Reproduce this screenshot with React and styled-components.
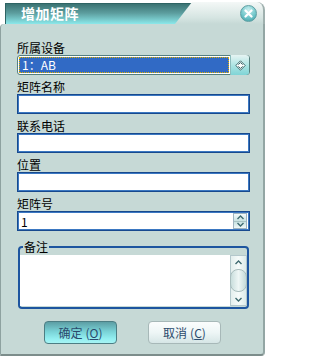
import React from "react";
import styled, { createGlobalStyle } from "styled-components";

const GlobalStyle = createGlobalStyle`
  body {
    margin: 0;
    background: #ffffff;
    font-family: "Noto Sans CJK SC", "DejaVu Sans", sans-serif;
  }
`;

const Window = styled.div`
  width: 265px;
  margin-top: 2px;
  display: flex;
  flex-direction: column;
`;

const Header = styled.div`
  display: flex;
  align-items: flex-end;
  height: 22px;
`;

const TitleTab = styled.div`
  margin-left: 5px;
  width: 187px;
  height: 21px;
  box-sizing: border-box;
  border-top: 1px solid #2e6464;
  border-left: 1px solid #2e6464;
  background: linear-gradient(#3b7373, #5c9d9e 45%, #8be8ea);
  color: #ffffff;
  font-weight: bold;
  font-size: 14px;
  line-height: 19px;
  padding-left: 15px;
  letter-spacing: 0.5px;
`;

const Cap = styled.div`
  flex: 1;
  margin-left: -17px;
  height: 22px;
  box-sizing: border-box;
  background: linear-gradient(#f4f8f7, #d6e5e2 70%, #c6d9d6);
  clip-path: polygon(0 100%, 17px 0, 100% 0, 100% 100%);
  border-top-right-radius: 8px;
  border-right: 2px solid #9fb0ae;
  display: flex;
  justify-content: flex-end;
  align-items: center;
  padding-right: 6px;
`;

const CloseButton = styled.div`
  width: 17px;
  height: 17px;
  border-radius: 50%;
  box-sizing: border-box;
  border: 1px solid #5e9ea2;
  background: radial-gradient(circle at 50% 25%, #c8eeee, #6cc4c8 60%, #3e9aa0);
  display: flex;
  align-items: center;
  justify-content: center;
`;

const Body = styled.div`
  height: 332px;
  box-sizing: border-box;
  background: #c6d9d6;
  border-left: 1px solid #8ea2a0;
  border-right: 2px solid #93a6a4;
  border-bottom: 2px solid #7c8d8b;
  border-top-left-radius: 4px;
  border-bottom-right-radius: 4px;
  padding: 17px 13px 0 16px;
  display: flex;
  flex-direction: column;
`;

const FieldGroup = styled.div`
  display: flex;
  flex-direction: column;
  margin-top: ${(p) => (p.$first ? 0 : 5)}px;
`;

const Label = styled.div`
  font-size: 12px;
  line-height: 14px;
  height: 14px;
  color: #000000;
`;

const Select = styled.div`
  height: 20px;
  box-sizing: border-box;
  border: 1px solid #55807e;
  border-radius: 3px;
  background: #ffffff;
  display: flex;
  padding: 1px 0 1px 1px;
`;

const SelectValue = styled.div`
  flex: 1;
  background: #316ac5;
  color: #ffffff;
  font-size: 12px;
  line-height: 16px;
  padding-left: 3px;
  outline: 1px dotted #e0b000;
  outline-offset: -1px;
`;

const SelectButton = styled.div`
  width: 18px;
  margin: -2px 0 -2px 1px;
  border-radius: 0 3px 3px 0;
  background: linear-gradient(#e6f4f3, #a9e3e2 55%, #7fd4d6);
  border-left: 1px solid #8cbcbc;
  display: flex;
  align-items: center;
  justify-content: center;
`;

const Input = styled.div`
  height: 20px;
  box-sizing: border-box;
  border: 1px solid #17498e;
  box-shadow: inset 0 0 0 1px #3b78c2;
  background: #ffffff;
  display: flex;
  align-items: center;
  justify-content: space-between;
  padding: 0 2px 0 3px;
  font-size: 12px;
`;

const Spinner = styled.div`
  width: 14px;
  height: 16px;
  box-sizing: border-box;
  border: 1px solid #9fb4c0;
  display: flex;
  flex-direction: column;
`;

const SpinHalf = styled.div`
  flex: 1;
  background: ${(p) =>
    p.$up
      ? "linear-gradient(#f4fafa, #c8e2e2)"
      : "linear-gradient(#c8e2e2, #f0f8f8)"};
  display: flex;
  align-items: center;
  justify-content: center;
  border-top: ${(p) => (p.$up ? "none" : "1px solid #a8c4c4")};
`;

const GroupBox = styled.fieldset`
  margin: 10px 1px 0 1px;
  padding: 2px 0 0 0;
  height: 68px;
  box-sizing: border-box;
  border: 2px solid #1d559f;
  border-radius: 4px;
  display: flex;
`;

const Legend = styled.legend`
  font-size: 12px;
  line-height: 12px;
  padding: 0 1px;
  margin-left: 3px;
  color: #000000;
`;

const Memo = styled.div`
  flex: 1;
  height: 51px;
  background: #ffffff;
  display: flex;
  justify-content: flex-end;
`;

const ScrollBar = styled.div`
  width: 17px;
  box-sizing: border-box;
  border: 1px solid #b4c8cc;
  background: linear-gradient(90deg, #e4efee, #f6fbfa 50%, #dcebea);
  display: flex;
  flex-direction: column;
  align-items: stretch;
`;

const ScrollArrow = styled.div`
  height: 12px;
  display: flex;
  align-items: center;
  justify-content: center;
`;

const ScrollThumb = styled.div`
  flex: 1;
  margin: 1px -1px;
  border: 1px solid #a9bdbd;
  border-radius: 8px;
  background: linear-gradient(90deg, #c9dedd, #eef6f5 50%, #c4dad9);
`;

const ButtonRow = styled.div`
  display: flex;
  justify-content: center;
  gap: 31px;
  margin-top: 12px;
  padding-right: 2px;
`;

const Button = styled.div`
  width: 73px;
  height: 23px;
  box-sizing: border-box;
  border-radius: 4px;
  border: 1px solid ${(p) => (p.$primary ? "#4c7e84" : "#a7b8b8")};
  background: ${(p) =>
    p.$primary
      ? "linear-gradient(#5c9ea4, #79d2d6 45%, #93eff1 80%, #a6f4f4)"
      : "linear-gradient(#fbfdfd, #eef6f6 50%, #d6e6e6)"};
  color: #2b4a6c;
  font-size: 12px;
  display: flex;
  align-items: center;
  justify-content: center;
  gap: 3px;
  u {
    text-decoration-thickness: 1px;
  }
`;

const Arrow = ({ down }) => (
  <svg width="7" height="5" viewBox="0 0 7 5">
    <path
      d={down ? "M0.5 1 L3.5 4 L6.5 1" : "M0.5 4 L3.5 1 L6.5 4"}
      fill="none"
      stroke="#3e6a70"
      strokeWidth="1.4"
    />
  </svg>
);

export default function App() {
  return (
    <>
      <GlobalStyle />
      <Window>
        <Header>
          <TitleTab>增加矩阵</TitleTab>
          <Cap>
            <CloseButton>
              <svg width="9" height="9" viewBox="0 0 9 9">
                <path
                  d="M1.5 1.5 L7.5 7.5 M7.5 1.5 L1.5 7.5"
                  stroke="#ffffff"
                  strokeWidth="2.2"
                  strokeLinecap="round"
                />
              </svg>
            </CloseButton>
          </Cap>
        </Header>
        <Body>
          <FieldGroup $first>
            <Label>所属设备</Label>
            <Select>
              <SelectValue>1：AB</SelectValue>
              <SelectButton>
                <svg width="11" height="11" viewBox="0 0 11 11">
                  <path
                    d="M5.5 0.8 L10.2 5.5 L5.5 10.2 L0.8 5.5 Z"
                    fill="#ffffff"
                    stroke="#3c6a6c"
                    strokeWidth="1"
                  />
                  <path
                    d="M3.3 4.6 L5.5 2.6 L7.7 4.6 M3.3 6.4 L5.5 8.4 L7.7 6.4"
                    fill="none"
                    stroke="#3c6a6c"
                    strokeWidth="1"
                  />
                </svg>
              </SelectButton>
            </Select>
          </FieldGroup>
          <FieldGroup>
            <Label>矩阵名称</Label>
            <Input />
          </FieldGroup>
          <FieldGroup>
            <Label>联系电话</Label>
            <Input />
          </FieldGroup>
          <FieldGroup>
            <Label>位置</Label>
            <Input />
          </FieldGroup>
          <FieldGroup>
            <Label>矩阵号</Label>
            <Input>
              <span>1</span>
              <Spinner>
                <SpinHalf $up>
                  <Arrow />
                </SpinHalf>
                <SpinHalf>
                  <Arrow down />
                </SpinHalf>
              </Spinner>
            </Input>
          </FieldGroup>
          <GroupBox>
            <Legend>备注</Legend>
            <Memo>
              <ScrollBar>
                <ScrollArrow>
                  <Arrow />
                </ScrollArrow>
                <ScrollThumb />
                <ScrollArrow>
                  <Arrow down />
                </ScrollArrow>
              </ScrollBar>
            </Memo>
          </GroupBox>
          <ButtonRow>
            <Button $primary>
              确定<span>(<u>O</u>)</span>
            </Button>
            <Button>
              取消<span>(<u>C</u>)</span>
            </Button>
          </ButtonRow>
        </Body>
      </Window>
    </>
  );
}
